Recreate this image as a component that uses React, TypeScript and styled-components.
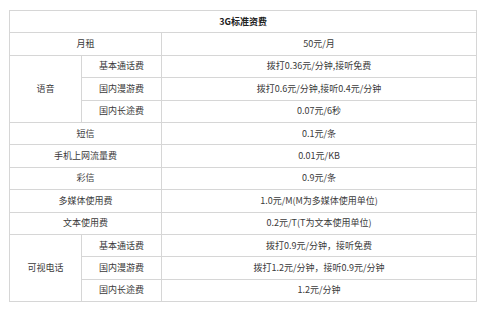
import styled, { createGlobalStyle } from "styled-components";

const GlobalStyle = createGlobalStyle`
  html, body {
    margin: 0;
    padding: 0;
    background: #ffffff;
  }
  body {
    font-family: "Noto Sans CJK SC", "Liberation Sans", sans-serif;
  }
`;

type Row =
  | { kind: "single"; label: string; value: string }
  | { kind: "group"; label: string; items: { sub: string; value: string }[] };

const rows: Row[] = [
  { kind: "single", label: "月租", value: "50元/月" },
  {
    kind: "group",
    label: "语音",
    items: [
      { sub: "基本通话费", value: "拨打0.36元/分钟,接听免费" },
      { sub: "国内漫游费", value: "拨打0.6元/分钟,接听0.4元/分钟" },
      { sub: "国内长途费", value: "0.07元/6秒" },
    ],
  },
  { kind: "single", label: "短信", value: "0.1元/条" },
  { kind: "single", label: "手机上网流量费", value: "0.01元/KB" },
  { kind: "single", label: "彩信", value: "0.9元/条" },
  { kind: "single", label: "多媒体使用费", value: "1.0元/M(M为多媒体使用单位)" },
  { kind: "single", label: "文本使用费", value: "0.2元/T(T为文本使用单位)" },
  {
    kind: "group",
    label: "可视电话",
    items: [
      { sub: "基本通话费", value: "拨打0.9元/分钟，接听免费" },
      { sub: "国内漫游费", value: "拨打1.2元/分钟，接听0.9元/分钟" },
      { sub: "国内长途费", value: "1.2元/分钟" },
    ],
  },
];

export default function App() {
  return (
    <>
      <GlobalStyle />
      <Page>
        <FeeTable>
          <colgroup>
            <col style={{ width: 72 }} />
            <col style={{ width: 80 }} />
            <col style={{ width: 315 }} />
          </colgroup>
          <tbody>
            <Tr>
              <Title colSpan={3}>3G标准资费</Title>
            </Tr>
            {rows.map((r) =>
              r.kind === "single" ? (
                <Tr key={r.label}>
                  <Cell colSpan={2}>{r.label}</Cell>
                  <Cell>{r.value}</Cell>
                </Tr>
              ) : (
                r.items.map((it, i) => (
                  <Tr key={r.label + it.sub}>
                    {i === 0 && <Cell rowSpan={r.items.length}>{r.label}</Cell>}
                    <Cell>{it.sub}</Cell>
                    <Cell>{it.value}</Cell>
                  </Tr>
                ))
              )
            )}
          </tbody>
        </FeeTable>
      </Page>
    </>
  );
}

const Page = styled.div`
  width: 500px;
  height: 332px;
  padding: 10px 0 0 9px;
  box-sizing: border-box;
`;

const FeeTable = styled.table`
  width: 468px;
  table-layout: fixed;
  border-collapse: collapse;
  color: #3a3a3a;
  font-size: 9px;
`;

const Tr = styled.tr`
  height: 22.4px;
`;

const Cell = styled.td`
  border: 1px solid #d6d6d6;
  padding: 0;
  text-align: center;
  vertical-align: middle;
  line-height: 12px;
  white-space: nowrap;
`;

const Title = styled(Cell)`
  font-weight: bold;
  color: #222;
`;
